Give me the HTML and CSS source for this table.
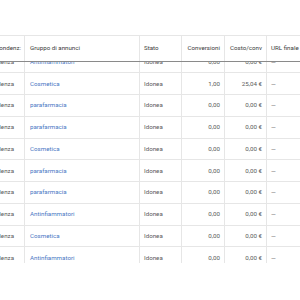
FILE: index.html
```html
<!DOCTYPE html>
<html lang="it">
<head>
  <meta charset="UTF-8" />
  <title>Gruppi di annunci</title>
  <link rel="stylesheet" href="styles.css">
</head>
<body>
  <div class="table-wrap">
    <div class="row head">
      <div class="cell">Corrispondenz:</div>
      <div class="cell">Gruppo di annunci</div>
      <div class="cell">Stato</div>
      <div class="cell num">Conversioni</div>
      <div class="cell num">Costo/conv</div>
      <div class="cell">URL finale</div>
    </div>
    <div class="rows" id="rows"></div>
  </div>

  <script>
    const data = [
      ["Antinfiammatori", "0,00", "0,00 €"],
      ["Cosmetica", "1,00", "25,04 €"],
      ["parafarmacia", "0,00", "0,00 €"],
      ["parafarmacia", "0,00", "0,00 €"],
      ["Cosmetica", "0,00", "0,00 €"],
      ["parafarmacia", "0,00", "0,00 €"],
      ["parafarmacia", "0,00", "0,00 €"],
      ["Antinfiammatori", "0,00", "0,00 €"],
      ["Cosmetica", "0,00", "0,00 €"],
      ["Antinfiammatori", "0,00", "0,00 €"]
    ];

    const rows = document.getElementById("rows");
    data.forEach(([gruppo, conv, costo]) => {
      const row = document.createElement("div");
      row.className = "row";
      row.innerHTML = `
        <div class="cell">Corrispondenza</div>
        <div class="cell"><a href="#">${gruppo}</a></div>
        <div class="cell">Idonea</div>
        <div class="cell num">${conv}</div>
        <div class="cell num">${costo}</div>
        <div class="cell">—</div>`;
      rows.appendChild(row);
    });
  </script>
</body>
</html>
```

FILE: styles.css
```css
* {
  box-sizing: border-box;
  margin: 0;
  padding: 0;
}
body {
  background: #fff;
  font-family: Roboto, "Liberation Sans", sans-serif;
  font-size: 6.2px;
  color: #5a5a5a;
  overflow: hidden;
}
.table-wrap {
  margin-top: 35px;
  margin-left: -48px;
  height: 228px;
  overflow: hidden;
}
.row {
  display: grid;
  grid-template-columns: 73px 115px 42px 43px 42px 60px;
  height: 21.75px;
  border-bottom: 1px solid #e6e6e6;
}
.cell {
  display: flex;
  align-items: center;
  padding: 0 5px;
  border-right: 1px solid #e6e6e6;
  white-space: nowrap;
  overflow: hidden;
}
.cell:first-child {
  justify-content: flex-end;
  padding-right: 10px;
}
.cell.num {
  justify-content: flex-end;
  padding-right: 4px;
}
.cell:nth-child(3),
.cell:last-child {
  padding-left: 4px;
}
.head {
  position: relative;
  z-index: 1;
  height: 26.5px;
  background: #fff;
  border-top: 1px solid #e6e6e6;
  border-bottom: 1.5px solid #8a8a8a;
  color: #3c3c3c;
}
.head .cell {
  padding-bottom: 1px;
}
.head .cell:first-child {
  padding-right: 3px;
}
.rows {
  margin-top: -10px;
}
.cell a {
  color: #4a78c4;
  text-decoration: none;
}
```
